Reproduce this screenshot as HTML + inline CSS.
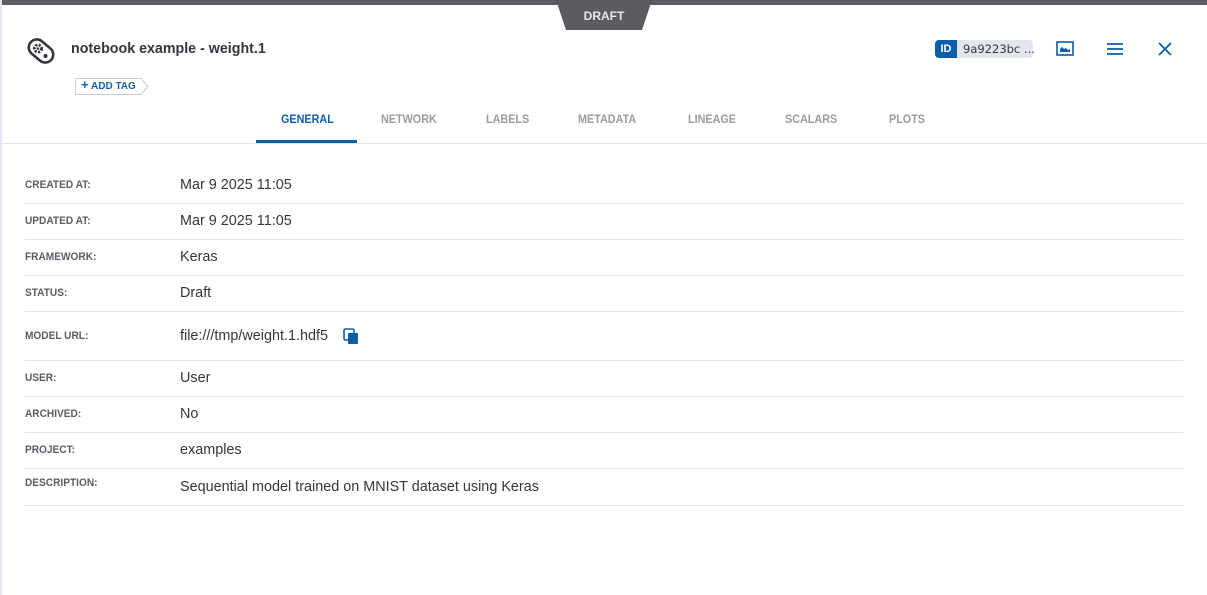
<!DOCTYPE html>
<html><head><style>
*{margin:0;padding:0;box-sizing:border-box}
body{width:1207px;height:595px;background:#fff;font-family:"Liberation Sans",sans-serif;position:relative;overflow:hidden}
.a{position:absolute}
.lbl{position:absolute;left:25px;font-size:11px;color:#5a5d66;font-weight:bold;transform:scaleX(.92);transform-origin:left}
.val{position:absolute;left:180px;font-size:14.4px;color:#33363f}
.ln{position:absolute;left:25px;width:1158px;height:1px;background:#e3e4ea}
.tab{position:absolute;top:112px;font-size:12px;font-weight:bold;color:#9a9ba2;transform:scaleX(.9);transform-origin:left}
</style></head><body>
<div class="a" style="left:0;top:0;width:1207px;height:5px;background:#5b5c61"></div>
<div class="a" style="left:0;top:0;width:2px;height:595px;background:#e4e4f0"></div>
<svg class="a" style="left:556px;top:0" width="96" height="31"><polygon points="0,0 96,0 86,30 10,30" fill="#5b5c61"/></svg>
<div class="a" style="left:556px;top:9px;width:96px;text-align:center;color:#e8e8ec;font-size:12px;font-weight:bold">DRAFT</div>
<svg class="a" style="left:26px;top:36px" width="30" height="30" viewBox="0 0 30 30"><g transform="rotate(40 15 15)"><rect x="1.5" y="7" width="27" height="16" rx="8" fill="none" stroke="#33363f" stroke-width="2.6"/></g><circle cx="12" cy="12.5" r="3.6" fill="none" stroke="#33363f" stroke-width="2.8" stroke-dasharray="2.2 1.3"/><circle cx="12" cy="12.5" r="1.3" fill="#33363f"/><circle cx="19.5" cy="20" r="2" fill="#33363f"/></svg>
<div class="a" style="left:71px;top:40px;font-size:15px;font-weight:bold;color:#33363f;transform:scaleX(.95);transform-origin:left">notebook example - weight.1</div>
<svg class="a" style="left:75px;top:78px" width="74" height="17"><path d="M1.5 .5H66l7 8-7 8H1.5a1 1 0 0 1-1-1V1.5a1 1 0 0 1 1-1z" fill="#fff" stroke="#c9cad2"/></svg>
<div class="a" style="left:81px;top:80px;font-size:10px;font-weight:bold;color:#1b5ea8"><span style="font-size:13px;line-height:10px">+</span> ADD TAG</div>
<div class="a" style="left:935px;top:40px;width:98px;height:18px;border-radius:4px;background:#e4e6ee"></div>
<div class="a" style="left:935px;top:40px;width:22px;height:18px;border-radius:4px 0 0 4px;background:#0b5ea8;color:#fff;font-size:11px;font-weight:bold;text-align:center;line-height:18px">ID</div>
<div class="a" style="left:963px;top:42px;font-size:11.5px;color:#33363f;font-family:'DejaVu Sans',sans-serif">9a9223bc ...</div>
<svg class="a" style="left:1056px;top:41px" width="19" height="16"><rect x="1" y="1" width="16" height="13" fill="none" stroke="#0b5ea8" stroke-width="1.6"/><path d="M4 11V8l2-2 2 2 2-1 2 2 2-1v3z" fill="#0b5ea8"/></svg>
<svg class="a" style="left:1106px;top:42px" width="18" height="14"><path d="M1 2h16M1 7h16M1 12h16" stroke="#0b5ea8" stroke-width="1.8"/></svg>
<svg class="a" style="left:1158px;top:42px" width="14" height="14"><path d="M1 1l12 12M13 1L1 13" stroke="#0b5ea8" stroke-width="1.8"/></svg>
<div class="tab" style="left:281px;color:#0b5ea8">GENERAL</div>
<div class="tab" style="left:381px">NETWORK</div>
<div class="tab" style="left:486px">LABELS</div>
<div class="tab" style="left:578px">METADATA</div>
<div class="tab" style="left:688px">LINEAGE</div>
<div class="tab" style="left:785px">SCALARS</div>
<div class="tab" style="left:889px">PLOTS</div>
<div class="a" style="left:256px;top:140px;width:101px;height:3px;background:#0b5ea8"></div>
<div class="a" style="left:2px;top:143px;width:1205px;height:1px;background:#e3e4ea"></div>

<div class="lbl" style="top:179px">CREATED AT:</div><div class="val" style="top:177px">Mar 9 2025 11:05</div><div class="ln" style="top:203px"></div>
<div class="lbl" style="top:215px">UPDATED AT:</div><div class="val" style="top:213px">Mar 9 2025 11:05</div><div class="ln" style="top:239px"></div>
<div class="lbl" style="top:251px">FRAMEWORK:</div><div class="val" style="top:249px">Keras</div><div class="ln" style="top:275px"></div>
<div class="lbl" style="top:287px">STATUS:</div><div class="val" style="top:285px">Draft</div><div class="ln" style="top:311px"></div>
<div class="lbl" style="top:330px">MODEL URL:</div><div class="val" style="top:328px">file:///tmp/weight.1.hdf5</div>
<svg class="a" style="left:343px;top:328px" width="16" height="17"><rect x="1" y="1" width="10" height="11" rx="1.5" fill="none" stroke="#0b5ea8" stroke-width="1.6"/><rect x="5" y="5" width="10" height="11" rx="1" fill="#0b5ea8"/></svg>
<div class="ln" style="top:360px"></div>
<div class="lbl" style="top:372px">USER:</div><div class="val" style="top:370px">User</div><div class="ln" style="top:396px"></div>
<div class="lbl" style="top:408px">ARCHIVED:</div><div class="val" style="top:406px">No</div><div class="ln" style="top:432px"></div>
<div class="lbl" style="top:444px">PROJECT:</div><div class="val" style="top:442px">examples</div><div class="ln" style="top:468px"></div>
<div class="lbl" style="top:477px">DESCRIPTION:</div><div class="val" style="top:479px">Sequential model trained on MNIST dataset using Keras</div><div class="ln" style="top:505px"></div>
</body></html>
